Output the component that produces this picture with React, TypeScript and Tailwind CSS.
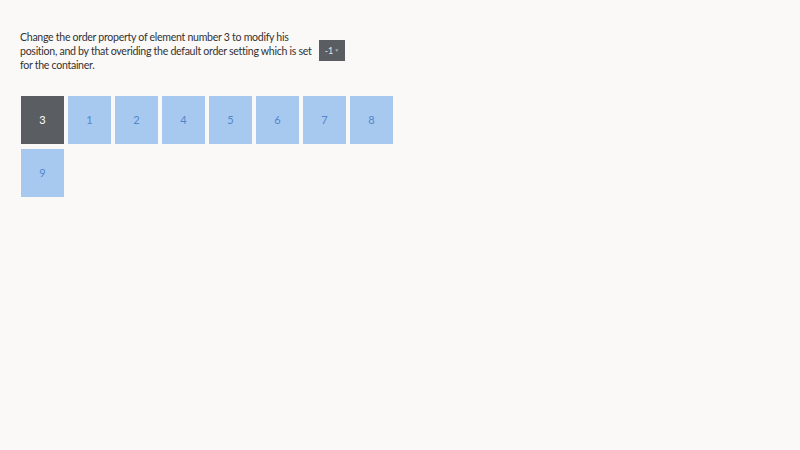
import { useState } from "react";

const items = [1, 2, 3, 4, 5, 6, 7, 8, 9];

export default function App() {
  const [order, setOrder] = useState("-1");

  return (
    <div
      className="min-h-[450px] w-full bg-[#faf9f7] pl-[20px] pt-[30px] text-[#333333]"
      style={{ fontFamily: "Lato, 'Open Sans', sans-serif" }}
    >
      {/* Description and order selector */}
      <div className="flex items-start">
        <p className="w-[293px] whitespace-nowrap text-[10.6px] leading-[14px] tracking-[-0.3px]">
          Change the order property of element number 3 to modify his
          <br />
          position, and by that overiding the default order setting which is set
          <br />
          for the container.
        </p>
        <div className="relative ml-[6px] mt-[10px] flex h-[21px] w-[26px] items-center justify-center bg-[#5a5e63]">
          <select
            value={order}
            onChange={(e) => setOrder(e.target.value)}
            className="absolute inset-0 cursor-pointer opacity-0"
          >
            <option value="-1">-1</option>
            <option value="0">0</option>
            <option value="1">1</option>
          </select>
          <span className="text-[9px] text-[#e6e6e6]">{order}</span>
          <span className="ml-[1px] text-[5px] text-[#a9abad]">▼</span>
        </div>
      </div>

      {/* Flex container */}
      <div className="mt-[24px] flex w-[400px] flex-wrap gap-x-[4px] gap-y-[5px] pl-[1px]">
        {items.map((n) => (
          <div
            key={n}
            style={{ order: n === 3 ? Number(order) : 0 }}
            className={
              n === 3
                ? "flex h-[48px] w-[43px] items-center justify-center bg-[#5a5e63] text-[11px] text-white"
                : "flex h-[48px] w-[43px] items-center justify-center bg-[#a8c9ef] text-[11px] text-[#5186cc]"
            }
          >
            {n}
          </div>
        ))}
      </div>
    </div>
  );
}
